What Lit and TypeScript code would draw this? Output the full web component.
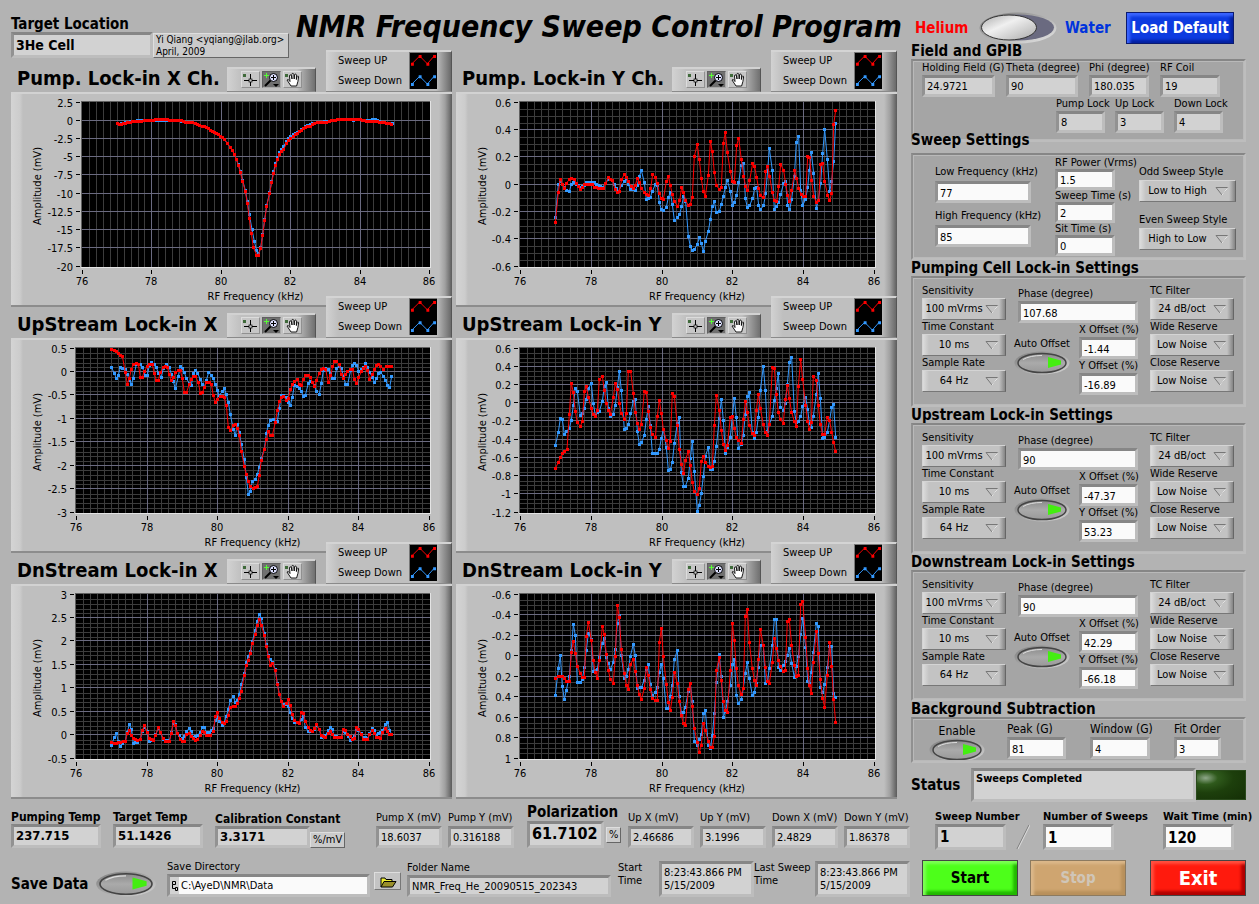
import { LitElement, html, svg, css } from "lit";
import { customElement, property } from "lit/decorators.js";

interface ChartSpec {
  title: string;
  /** Corner of the recorder raster (three units per pixel) shown at the panel corner. */
  corner: [number, number];
  plotLeft: number;
  plotRight: number;
  y: { from: number; to: number; step: number; minor: number };
  up: string;
  down: string;
}

const CHARTS: ChartSpec[] = [
  {
    title: "Pump. Lock-in X Ch.",
    corner: [33, 276],
    plotLeft: 71,
    plotRight: 418,
    y: { from: 2.5, to: -20, step: 2.5, minor: 0 },
    up: "351 371 358 373 376 370 397 365 425 363 453 361 474 358 495 358 515 361 543 361 557 367 578 368 592 374 613 380 625 386 637 394 649 400 661 408 673 418 682 430 691 443 697 451 703 463 709 478 715 496 721 517 728 544 736 574 742 610 748 655 754 700 760 742 770 766 775 766 782 745 788 706 794 661 800 619 809 580 815 547 821 520 827 496 833 478 839 463 851 448 860 430 872 415 886 404 898 395 910 386 930 378 952 368 980 367 995 361 1020 359 1042 358 1060 359 1080 358 1100 364 1125 363 1145 368 1160 369 1175 373",
    down: "351 371 358 373 376 368 397 364 425 360 453 361 474 360 495 360 515 361 543 363 557 367 578 367 592 374 613 380 625 386 637 394 649 400 661 408 673 418 682 430 691 443 697 451 703 463 709 478 715 493 721 514 728 541 736 571 742 604 748 644 756 688 763 724 770 752 776 760 782 742 788 703 794 658 800 616 809 578 815 543 821 514 827 490 833 473 839 458 851 438 860 424 872 409 886 400 898 393 910 384 930 374 952 367 980 365 995 361 1020 359 1042 357 1060 360 1080 359 1100 362 1125 359 1145 366 1160 370 1177 370",
  },
  {
    title: "Pump. Lock-in Y Ch.",
    corner: [3, 276],
    plotLeft: 64,
    plotRight: 418,
    y: { from: 0.6, to: -0.6, step: 0.2, minor: 4 },
    up: "301 667 310 577 316 537 322 553 328 565 334 550 343 538 349 534 358 538 364 550 370 559 376 568 382 562 388 553 412 553 418 562 436 565 446 565 452 550 460 532 466 538 472 540 480 568 488 577 493 574 500 538 508 523 514 532 520 543 528 559 536 566 541 556 547 535 553 547 560 566 568 577 575 583 581 587 587 565 593 523 601 532 607 550 613 580 619 596 625 599 634 544 640 530 646 556 652 583 658 604 668 619 674 602 680 562 686 578 692 602 700 616 706 613 712 592 718 468 727 434 733 478 739 536 745 575 751 589 760 526 766 425 772 455 778 517 784 556 793 569 799 562 805 430 811 397 817 457 826 515 832 545 838 548 845 436 851 415 859 478 866 530 872 560 878 572 884 541 893 490 899 500 905 533 911 566 917 587 926 593 932 514 938 499 944 530 952 578 957 600 965 605 971 560 977 493 986 511 992 553 998 586 1004 605 1010 571 1019 512 1025 535 1031 565 1038 583 1046 590 1052 590 1058 469 1064 472 1070 541 1076 590 1085 607 1091 601 1097 493 1103 490 1109 544 1118 586 1124 601 1130 580 1136 373 1142 331",
    down: "301 653 310 553 316 545 322 553 328 562 334 571 343 574 349 553 355 547 364 553 376 562 388 556 394 547 418 548 430 556 442 562 452 550 460 538 472 541 484 565 490 574 500 556 508 544 514 535 520 553 526 568 541 571 547 556 553 529 559 511 568 547 574 598 580 595 586 592 592 574 601 553 607 556 613 608 619 628 625 632 634 622 640 592 646 577 652 613 658 661 668 653 674 643 680 619 686 589 692 604 700 709 706 739 712 751 718 748 727 733 733 712 739 730 745 754 751 724 760 694 766 658 772 619 778 604 784 637 793 634 799 613 805 589 811 562 817 541 826 574 832 616 838 607 845 586 851 547 859 496 866 490 871 595 877 622 884 616 893 595 899 565 905 562 911 616 917 629 926 616 932 580 938 511 943 445 952 511 958 628 964 619 971 607 977 583 986 550 992 545 998 616 1004 629 1010 598 1018 530 1024 427 1031 409 1037 571 1043 616 1052 598 1058 562 1063 511 1069 457 1076 520 1084 625 1090 601 1097 550 1103 460 1109 388 1117 478 1124 574 1130 545 1136 484 1142 370",
  },
  {
    title: "UpStream Lock-in X",
    corner: [33, 129],
    plotLeft: 65,
    plotRight: 418,
    y: { from: 0.5, to: -3, step: 0.5, minor: 5 },
    up: "334 163 343 166 349 169 355 175 361 181 367 184 376 232 382 268 388 250 394 223 400 208 409 205 415 208 421 247 427 247 433 229 442 214 448 208 457 208 463 235 469 256 475 256 481 232 490 217 496 214 502 217 508 238 514 256 520 247 526 232 535 226 541 226 547 250 553 292 559 293 568 268 574 253 580 244 586 244 595 262 601 295 607 293 613 277 619 262 628 262 634 268 640 301 646 322 653 313 660 304 667 304 673 307 679 331 685 397 692 407 699 391 706 388 712 400 718 421 724 469 733 514 739 538 745 560 751 574 760 580 766 577 772 574 778 541 784 496 793 463 799 433 805 409 811 421 817 421 826 382 832 346 838 319 844 307 851 304 859 316 865 310 872 283 877 268 883 259 892 253 898 268 904 271 910 253 916 241 925 241 931 247 937 262 943 275 949 256 958 235 964 223 970 220 977 223 985 262 992 241 998 214 1004 200 1010 200 1018 208 1024 238 1030 250 1037 238 1043 230 1052 223 1058 223 1063 253 1070 265 1076 247 1085 229 1097 214 1103 226 1109 253 1117 238 1124 223 1130 211 1136 208 1142 214 1151 223 1160 214 1175 214",
    down: "334 217 343 235 349 250 355 241 361 217 376 223 382 238 388 256 394 268 400 250 409 208 421 208 427 217 436 241 442 241 448 211 454 202 463 208 469 217 475 235 484 247 490 220 500 208 508 217 514 238 520 259 526 281 535 244 541 214 547 220 553 232 559 250 568 265 574 271 580 235 586 226 593 235 601 253 607 268 613 277 619 256 626 232 634 241 640 250 646 268 652 286 658 301 667 289 673 280 679 298 685 322 691 358 700 403 706 421 712 388 718 412 724 448 733 493 739 547 745 598 751 589 757 559 766 553 772 538 778 517 784 490 793 463 799 415 805 391 811 376 819 373 826 379 832 379 838 340 844 301 851 301 859 307 865 322 871 331 877 307 883 272 892 274 898 280 904 289 910 304 916 301 925 265 931 259 937 262 943 271 949 289 958 298 964 265 970 226 977 220 985 223 992 235 998 250 1004 250 1010 220 1018 214 1024 220 1037 268 1043 268 1052 226 1058 211 1063 205 1070 211 1076 229 1085 223 1091 217 1097 205 1103 217 1109 232 1117 247 1124 262 1130 250 1136 235 1142 232 1151 244 1157 256 1163 271 1169 277 1175 244",
  },
  {
    title: "UpStream Lock-in Y",
    corner: [3, 129],
    plotLeft: 64,
    plotRight: 418,
    y: { from: 0.6, to: -1.2, step: 0.2, minor: 4 },
    up: "301 520 310 502 316 487 322 475 328 469 336 463 343 358 349 265 355 292 361 349 367 382 376 394 382 379 388 289 394 274 400 307 409 340 415 358 421 364 427 346 433 253 442 244 448 286 454 325 460 346 466 358 475 307 481 265 487 283 493 325 499 355 508 373 514 355 520 229 527 229 535 295 541 352 547 385 553 403 559 388 568 289 574 292 580 349 586 397 592 418 601 427 607 364 613 316 619 355 625 403 634 436 640 460 646 439 652 295 658 304 667 391 673 463 679 508 686 535 691 496 700 469 706 511 712 562 718 589 727 598 733 580 739 499 745 484 751 502 760 514 766 517 772 514 778 391 784 301 793 346 799 406 805 448 811 466 817 451 826 367 832 364 838 400 844 427 850 436 859 445 865 373 871 319 877 352 883 391 892 415 898 421 904 346 910 298 916 340 925 388 931 412 937 421 943 388 952 217 958 220 964 298 970 352 976 373 985 385 991 313 997 271 1003 310 1010 352 1018 379 1024 394 1030 274 1037 193 1043 253 1052 331 1058 379 1063 403 1069 382 1075 244 1084 256 1090 331 1096 388 1103 418 1109 418 1117 367 1124 376 1130 412 1136 442 1142 469",
    down: "301 451 310 412 316 370 322 373 328 418 334 409 343 400 349 376 355 331 361 280 367 289 376 361 382 355 388 340 394 313 400 280 409 265 415 325 421 361 427 352 433 349 442 319 448 274 454 262 460 340 466 364 475 358 481 331 487 277 493 229 499 286 508 403 514 400 520 388 527 355 535 319 541 313 547 409 553 448 559 442 568 421 574 373 580 334 586 391 592 475 607 475 613 463 619 430 625 403 634 457 640 526 646 523 652 502 658 445 667 385 673 367 679 532 686 574 691 574 700 550 706 490 712 439 718 529 727 649 733 631 739 595 745 544 751 484 760 457 766 523 772 523 778 499 784 454 793 370 799 313 805 376 811 475 817 457 826 427 832 364 838 310 844 367 850 460 859 448 865 421 871 358 877 304 883 292 892 412 898 430 904 412 910 367 916 286 925 214 931 286 937 409 943 388 952 364 958 316 964 280 970 235 976 337 985 346 991 325 997 268 1003 202 1010 187 1018 349 1024 382 1030 379 1037 364 1043 334 1052 307 1058 343 1063 385 1069 397 1075 364 1084 298 1090 235 1096 310 1103 430 1109 427 1117 412 1124 376 1130 337 1136 328 1142 427",
  },
  {
    title: "DnStream Lock-in X",
    corner: [33, 132],
    plotLeft: 65,
    plotRight: 418,
    y: { from: 3, to: -0.5, step: 0.5, minor: 5 },
    up: "334 607 343 610 355 608 376 604 382 580 388 571 394 586 400 595 412 601 421 598 427 571 433 556 442 577 448 595 460 601 466 586 475 562 481 577 490 595 496 603 508 604 514 580 520 544 526 556 532 580 541 598 547 604 553 604 559 583 568 580 574 589 586 601 592 598 601 586 607 574 613 577 619 586 631 586 640 574 646 529 652 517 658 535 667 547 673 550 679 544 685 526 691 502 700 499 706 499 712 490 718 475 724 454 733 406 739 376 745 361 751 340 757 310 766 283 772 256 778 238 784 256 793 286 799 319 805 349 811 376 817 370 826 391 832 433 838 463 844 484 850 499 859 490 865 478 871 496 877 523 883 541 892 547 898 550 904 517 910 520 916 544 925 562 931 571 937 574 943 565 949 553 958 568 964 586 976 592 985 580 991 574 997 583 1003 592 1024 592 1030 568 1037 571 1043 583 1058 598 1063 595 1070 562 1076 568 1084 583 1090 598 1103 598 1109 583 1117 571 1124 580 1130 592 1142 595 1148 577 1157 565 1163 574 1169 583 1175 583",
    down: "334 616 343 592 349 580 355 604 361 619 376 604 382 577 388 553 394 568 400 610 412 607 421 598 427 574 433 562 442 574 448 604 460 601 475 565 481 577 490 598 508 604 520 550 526 553 532 580 547 595 553 589 559 574 568 565 574 574 580 592 592 586 601 577 607 562 613 562 619 577 628 577 640 565 646 541 652 532 658 544 667 556 673 547 679 529 685 508 691 481 700 469 706 487 712 481 718 463 724 433 733 400 739 367 745 349 751 334 757 304 766 271 772 244 778 223 784 235 793 280 799 313 805 346 811 358 817 367 826 388 832 430 838 463 844 484 850 493 859 493 865 499 871 517 877 535 883 547 898 550 910 529 916 562 925 574 937 574 943 568 949 556 958 568 964 592 976 586 985 571 991 562 997 568 1003 589 1024 592 1030 574 1037 577 1051 601 1063 589 1070 568 1076 571 1090 592 1103 595 1109 580 1117 565 1124 571 1130 586 1142 577 1148 571 1157 553 1163 547 1169 571 1175 583",
  },
  {
    title: "DnStream Lock-in Y",
    corner: [3, 132],
    plotLeft: 64,
    plotRight: 418,
    y: { from: -0.6, to: 1, step: 0.2, minor: 4 },
    up: "301 415 310 409 316 409 322 410 328 415 334 424 343 424 349 337 355 304 361 340 367 379 376 400 382 412 388 412 394 289 400 247 409 301 415 361 421 397 427 415 433 361 442 259 448 283 454 343 460 391 466 418 475 430 481 349 487 196 493 232 499 328 508 400 514 436 520 448 526 373 535 358 541 394 547 436 553 463 559 478 568 445 574 382 580 406 586 448 592 475 601 481 607 481 613 307 619 265 625 349 634 433 640 487 646 511 652 472 658 397 667 430 673 484 679 526 685 550 691 556 700 448 706 430 712 499 718 565 727 607 733 637 739 616 745 550 751 571 760 604 766 622 772 622 778 589 784 391 793 352 799 421 805 484 811 511 817 517 826 391 832 250 838 301 844 385 850 436 859 463 865 445 871 229 877 208 883 307 892 385 898 421 904 436 910 358 916 268 925 316 931 382 937 424 943 430 952 367 958 295 964 325 970 361 976 379 985 394 991 391 997 244 1003 238 1010 316 1018 376 1024 409 1030 406 1037 193 1043 184 1052 292 1058 385 1063 436 1069 460 1075 367 1084 274 1090 340 1096 418 1103 475 1109 502 1117 406 1124 307 1130 379 1136 478 1142 547",
    down: "301 466 310 385 316 346 322 439 328 478 334 451 343 409 349 331 355 253 361 286 367 427 376 427 382 418 388 382 394 331 400 280 409 298 415 394 421 391 427 388 433 352 442 310 448 295 454 352 466 388 475 367 481 328 487 250 493 226 499 346 508 415 514 409 520 388 526 349 535 313 541 346 547 445 559 442 568 421 574 388 580 373 586 433 592 466 601 457 607 442 613 397 619 373 625 415 634 505 640 505 652 436 658 358 667 331 673 469 679 517 685 517 691 502 700 454 706 430 712 484 718 604 727 616 739 583 745 520 751 511 760 616 766 625 772 586 778 520 784 427 793 343 799 409 805 532 811 514 817 484 826 436 832 373 838 358 844 466 850 490 859 478 865 445 871 400 877 367 883 415 892 466 898 457 904 430 910 382 916 316 925 316 931 430 937 424 943 385 952 316 958 238 964 238 970 382 976 391 985 376 991 364 997 346 1003 325 1010 370 1018 412 1030 349 1037 283 1043 235 1052 322 1058 424 1063 430 1069 397 1075 337 1084 250 1090 259 1096 442 1103 457 1109 433 1117 382 1124 319 1130 319 1136 460 1142 472",
  },
];

/** Parses a trace and fills long stretches so that samples stay evenly spaced. */
function samples(trace: string): [number, number][] {
  const n = trace.split(" ").map(Number);
  const out: [number, number][] = [[n[0], n[1]]];
  for (let i = 2; i < n.length; i += 2) {
    const [px, py] = out[out.length - 1];
    const parts = Math.max(1, Math.round((n[i] - px) / 7));
    for (let k = 1; k <= parts; k++) {
      out.push([px + ((n[i] - px) * k) / parts, py + ((n[i + 1] - py) * k) / parts]);
    }
  }
  return out;
}

const FONT = css`"DejaVu Sans Condensed", "Noto Sans", sans-serif`;

@customElement("sweep-chart")
export class SweepChart extends LitElement {
  @property({ attribute: false }) spec!: ChartSpec;

  static styles = css`
    :host { display: block; min-width: 0; font: 11px/14px ${FONT}; color: #000; }
    * { box-sizing: border-box; }
    .head { display: grid; grid-template-columns: 216px 89px 1fr 126px; height: 42px; align-items: end; }
    h2 { margin: 0; padding-left: 6px; font-size: 20px; line-height: 28px; font-weight: bold; white-space: nowrap; }
    .palette {
      display: flex; gap: 2px; height: 25px; padding: 2px 0 0 14px;
      background: linear-gradient(90deg, #d2d2d2, #c0c0c0 14px, #c0c0c0 70px, #707070);
      border-top: 2px solid #d2d2d2; border-bottom: 1px solid #8a8a8a; border-right: 1px solid #555;
    }
    .tool { width: 19px; height: 17px; padding: 0; border: 1px solid; border-color: #dcdcdc #909090 #909090 #dcdcdc; background: #c6c6c6; }
    .tool.on { background: #707070; border-color: #606060 #aaa #aaa #606060; }
    .tool svg { display: block; width: 17px; height: 15px; }
    .legend {
      grid-column: 4; display: grid; grid-template-columns: 1fr 28px; height: 42px; padding: 0 14px 1px 12px;
      background: linear-gradient(90deg, #d2d2d2, #bfbfbf 12px, #bfbfbf 110px, #6a6a6a);
      border-top: 2px solid #d4d4d4; border-bottom: 1px solid #8a8a8a; border-right: 1px solid #555;
    }
    .names { display: grid; grid-template-rows: 20px 20px; font-size: 11px; line-height: 18px; }
    .swatch { display: block; width: 28px; height: 37px; background: #000; border: solid #777; border-width: 1px 0 0 1px; }
    .panel {
      border-top: 2px solid #d2d2d2; border-bottom: 2px solid #8c8c8c; height: 215px;
      background: linear-gradient(90deg, #d4d4d4, #cccccc 9px, #bfbfbf 12px, #bfbfbf calc(100% - 13px), #a0a0a0 calc(100% - 7px), #5c5c5c);
    }
    .plot { display: block; width: 100%; height: 215px; margin-top: -2px; }
    .plot text { font-size: 11px; fill: #000; }
    .major { stroke: #6a6a80; } .minor { stroke: #3c3c3c; } .tick { stroke: #000; }
    .up { stroke: #ff0000; fill: none; stroke-width: 3; }
    .down { stroke: #3399ff; fill: none; stroke-width: 3; }
    .updot { fill: #ff0000; } .downdot { fill: #3399ff; }
  `;

  private trace(data: string, kind: string) {
    const pts = samples(data);
    return svg`
      <polyline class=${kind} points=${pts.map((p) => p.join(",")).join(" ")}></polyline>
      <path class=${kind + "dot"} shape-rendering="crispEdges" d=${pts.map(([x, y]) => `M${x - 4.5} ${y - 4.5}h9v9h-9z`).join("")}></path>`;
  }

  private grid() {
    const { plotLeft: l, plotRight: r, y } = this.spec;
    const top = 10.5;
    const bottom = 174.5;
    const at = (a: number, b: number, k: number, n: number) => Math.round(a + ((b - a) * k) / n);
    const rows = Math.round(Math.abs(y.to - y.from) / y.step);
    const sub = y.minor || 1;
    const sign = y.to > y.from ? 1 : -1;
    const lines = [];
    for (let k = 1; k < 50; k++) if (k % 10) lines.push(svg`<path class="minor" d="M${at(l, r, k, 50) + 0.5} 10V175"></path>`);
    for (let k = 1; k < rows * sub; k++) if (k % sub) lines.push(svg`<path class="minor" d="M${l} ${at(top, bottom, k, rows * sub) + 0.5}H${r + 1}"></path>`);
    for (let k = 1; k < 5; k++) lines.push(svg`<path class="major" d="M${at(l, r, k, 5) + 0.5} 10V175"></path>`);
    for (let k = 0; k <= rows; k++) {
      const yy = at(top, bottom, k, rows) - 0.5;
      if (k && k < rows) lines.push(svg`<path class="major" d="M${l} ${yy}H${r + 1}"></path>`);
      lines.push(svg`<path class="tick" d="M${l - 6} ${yy}h4"></path>
        <text x=${l - 9} y=${yy + 4.5} text-anchor="end">${Number((y.from + sign * k * y.step).toFixed(2))}</text>`);
    }
    for (let k = 0; k <= 5; k++) {
      lines.push(svg`<path class="tick" d="M${at(l, r, k, 5) + 0.5} 178v4"></path>
        <text x=${at(l, r, k, 5)} y="193" text-anchor="middle">${76 + 2 * k}</text>`);
    }
    return lines;
  }

  render() {
    const { title, corner, plotLeft: l, plotRight: r, up, down } = this.spec;
    const cy = 94;
    const cx = 30;
    return html`
      <div class="head">
        <h2>${title}</h2>
        <div class="palette">
          <button class="tool" aria-label="Cursor"><svg viewBox="0 0 17 15"><rect x="1" y="2" width="3" height="3" fill="#3f6a3a"/><path d="M2 8.500h13M8.500 2v12" stroke="#000"/><rect x="7" y="7" width="3" height="3" fill="#c6c6c6" stroke="#000" stroke-width=".7"/></svg></button>
          <button class="tool on" aria-label="Zoom"><svg viewBox="0 0 17 15"><path d="M1 3.500h5M3.500 1v5" stroke="#5f3"/><path d="M8 8l-6 6" stroke="#000" stroke-width="2"/><circle cx="10.500" cy="5.500" r="4" fill="#dde0ff" stroke="#000"/><path d="M8 5.500h5M10.500 3v5" stroke="#000"/><path d="M10 12h6l-3 3z"/></svg></button>
          <button class="tool" aria-label="Pan"><svg viewBox="0 0 17 15"><rect x="1" y="2" width="3" height="3" fill="#3f6a3a"/><path d="M7 14c-1-2-3-4-4-6 1-1 2 0 3 1.500L5.500 4c0-1.500 1.700-1.500 2 0l.5 3-.2-4.500c0-1.500 1.900-1.500 2 0l.4 4.500.3-4c.2-1.300 1.800-1.200 1.900 0v4.500l.7-3c.5-1 1.600-.6 1.500.5-.2 3-1 6-2 9z" fill="#fff" stroke="#000" stroke-width=".9"/></svg></button>
        </div>
        <div class="legend">
          <div class="names"><span>Sweep UP</span><span>Sweep Down</span></div>
          <svg class="swatch" viewBox="0 0 28 37">
            ${[
              ["#ff0000", 0],
              ["#3399ff", 21],
            ].map(([c, dy]) => svg`<path d="M2 ${11 + +dy}L10 ${3 + +dy}L18 ${11 + +dy}L25 ${3 + +dy}" fill="none" stroke=${c}></path>
              <path d="M1 ${10 + +dy}h3v3h-3zM9 ${2 + +dy}h3v3h-3zM17 ${10 + +dy}h3v3h-3zM24 ${2 + +dy}h3v3h-3z" fill=${c}></path>`)}
          </svg>
        </div>
      </div>
      <div class="panel">
        <svg class="plot" viewBox="0 0 441 215">
          <path d="M${l - 1} 9H${r + 2}V176H${l - 1}z" fill="#e4e4e4"></path>
          <path d="M${l - 1} 9H${r + 1}V10H${l}V175H${l - 1}z" fill="#606060"></path>
          <rect x=${l} y="10" width=${r - l + 1} height="165" fill="#000"></rect>
          ${this.grid()}
          <text x=${(l + r) / 2} y="208" text-anchor="middle">RF Frequency (kHz)</text>
          <text x=${cx} y=${cy} text-anchor="middle" transform="rotate(-90 ${cx} ${cy})">Amplitude (mV)</text>
          <svg x="0" y="0" width="441" height="215" viewBox="${corner[0]} ${corner[1]} 1323 645">
            ${this.trace(down, "down")}${this.trace(up, "up")}
          </svg>
        </svg>
      </div>`;
  }
}

interface FieldOpts { out?: boolean; cls?: string; unit?: string }

@customElement("app-root")
export class AppRoot extends LitElement {
  static styles = css`
    :host { display: block; font: 11px/14px ${FONT}; color: #000; background: #b3b3b3; }
    * { box-sizing: border-box; }
    button, input, select, output { font: inherit; color: inherit; }
    h1, h2 { margin: 0; white-space: nowrap; }
    .page { display: grid; grid-template-columns: minmax(0, 1fr) 335px; gap: 14px; padding: 0 13px 8px 11px; background: #b3b3b3; }
    .left { min-width: 0; }

    .bevel {
      display: block; width: 100%; height: 22px; margin: 0; padding: 2px 0 0 2px; line-height: 14px; outline: 0; border-radius: 0;
      border: 3px solid; border-color: #868686 #bdbdbd #bdbdbd #929292; background: #fafafa; white-space: nowrap; overflow: hidden;
    }
    .out { background: #d2d2d2; }
    .field { display: block; min-width: 0; white-space: nowrap; }
    .name { display: block; }

    .top { display: flex; height: 50px; white-space: nowrap; }
    .target { flex: none; width: 142px; padding-top: 17px; font-size: 15px; line-height: 15px; font-weight: bold; }
    .target .bevel { height: 26px; padding-top: 3px; font-size: 14px; }
    .author { align-self: start; flex: none; width: 136px; height: 25px; margin-top: 33px; padding-left: 2px; font-size: 10px; line-height: 12px; background: #cbcbcb; border: 1px solid; border-color: #dedede #666 #666 #dedede; }
    h1 { padding: 8px 0 0 7px; font-size: 30px; line-height: 38px; font-style: italic; font-weight: bold; }
    .charts { display: grid; grid-template-columns: 1fr 1fr; gap: 0 4px; }
    .charts sweep-chart:nth-child(n + 3) { margin-top: -11px; }

    .readouts { display: grid; grid-template-columns: 102px 102px 161px 72px 79px 101px 72px 72px 72px 66px; align-items: end; margin-right: -13px; padding-top: 4px; }
    .temp { width: 90px; font-size: 12px; font-weight: bold; }
    .temp .bevel { height: 24px; font-size: 13px; }
    .cal { font-size: 12px; font-weight: bold; }
    .row { display: flex; align-items: end; }
    .cal .bevel { width: 95px; font-size: 13px; height: 22px; padding-top: 1px; }
    .polar { font-size: 15px; font-weight: bold; }
    .polar .name { line-height: 18px; }
    .polar .bevel { width: 77px; height: 27px; font-size: 16px; line-height: 18px; padding-top: 1px; }
    .mv { width: 66px; }
    .mv .name { line-height: 16px; }
    .unit { flex: none; height: 16px; padding: 0 2px; line-height: 14px; font-weight: normal; font-size: 11px; background: #cbcbcb; border: 1px solid; border-color: #dedede #666 #666 #dedede; }
    .polar .unit { align-self: center; margin-left: 2px; }

    .save { display: grid; grid-template-columns: 156px 207px 33px 211px 41px 95px 61px 95px; align-items: end; margin: 12px -13px 0 0; height: 36px; white-space: nowrap; }
    .savedata { display: flex; align-items: center; justify-content: space-between; width: 146px; height: 26px; font-size: 15px; font-weight: bold; }
    .path { display: grid; grid-template-columns: 9px 1fr; width: 203px; height: 23px; border: 3px solid; border-color: #868686 #bdbdbd #bdbdbd #929292; background: #d2d2d2; }
    .path svg { width: 9px; height: 17px; }
    .path input { min-width: 0; border: 0; padding: 0 2px; background: #fafafa; outline: 0; }
    .browse { width: 27px; height: 18px; margin-bottom: 7px; padding: 0; background: #c4c4c4; border: 1px solid; border-color: #dedede #777 #777 #dedede; }
    .browse svg { display: block; margin: 0 auto; width: 18px; height: 13px; }
    .folder { width: 204px; }
    .stamp { height: 36px; width: 95px; padding: 2px 0 0 2px; line-height: 13px; white-space: pre-line; }
    .two { align-self: start; line-height: 13px; padding-top: 1px; white-space: pre-line; }

    .side { display: flex; flex-direction: column; min-width: 0; }
    .mode { display: flex; align-items: center; height: 31px; margin-top: 12px; padding: 0 12px 0 4px; font-size: 15px; font-weight: bold; }
    .he { width: 64px; color: #f00; } .water { width: 61px; padding-left: 8px; color: #0033dd; }
    .slide { width: 78px; height: 32px; padding: 0; border: 0; background: none; }
    .slide svg { display: block; width: 78px; height: 32px; }
    .cmd { height: 36px; width: 96px; padding: 0; font-size: 15px; font-weight: bold; border: 1px solid #444; white-space: nowrap; }
    .load { width: 108px; height: 32px; flex: none; margin-left: auto; color: #fff; background: #0d3be0; border-color: #0a1a70; box-shadow: inset 3px 3px 3px #3d66ff, inset -3px -3px 3px #0420a0; }
    .start { background: #4dff1a; box-shadow: inset 3px 3px 3px #7dff55, inset -4px -4px 3px #22b800; }
    .stop { background: #cfa570; color: #d0c6b8; border-color: #8c7a60; box-shadow: inset 3px 3px 3px #dbb88a, inset -4px -4px 3px #b8905c; }
    .exit { background: #ff1a0d; color: #fff; font-size: 20px; box-shadow: inset 3px 3px 3px #ff5040, inset -4px -4px 3px #b00000; }

    .side h2 { font-size: 15px; line-height: 16px; font-weight: bold; }
    .box { background: #a5a5a5; border: 2px solid; border-color: #868686 #bdbdbd #bdbdbd #909090; outline: 1px solid #b9b9b9; outline-offset: -3px; }
    .gpib { height: 83px; padding-left: 9px; }
    .gpib .r1 { display: grid; grid-template-columns: 73px 72px 60px 60px; gap: 11px; }
    .gpib .r2 { display: grid; grid-template-columns: 49px 49px 49px; gap: 10px; margin-left: 134px; }
    .side .over { margin-top: -11px; padding-bottom: 4px; line-height: 18px; }
    .sweep { display: grid; grid-template-columns: 96px 60px 97px; column-gap: 24px; height: 107px; padding-left: 22px; }
    .sa { display: grid; align-content: start; gap: 6px; padding-top: 10px; }
    .sa .bevel { margin-top: 2px; }
    .sb { padding-top: 2px; } .sb .name { line-height: 12px; } .sb .bevel { height: 21px; padding-top: 1px; }
    .sc { display: grid; align-content: start; gap: 10px; padding-top: 9px; }
    .sc .name { line-height: 16px; }
    .lock { display: grid; grid-template-columns: 92px 136px 84px; height: 131px; padding-left: 9px; }
    .stack { width: 84px; padding-top: 6px; }
    .mid { padding: 9px 12px 0 0; }
    .phase { margin-left: 4px; }
    .offsets { display: flex; justify-content: space-between; }
    .offsets .vals { width: 59px; }
    .auto { padding-top: 14px; }
    .press { display: flex; flex-direction: column; align-items: center; white-space: nowrap; }
    .bg { display: grid; grid-template-columns: 52px 59px 60px 47px; column-gap: 24px; height: 46px; padding: 2px 0 0 18px; }
    .bg .name { font-size: 12px; line-height: 16px; }
    .bg .press { padding-top: 3px; font-size: 12px; }

    .pick { display: grid; height: 22px; background: linear-gradient(90deg, #dcdcdc, #c3c3c3 6px, #c3c3c3 calc(100% - 6px), #858585); border: 1px solid; border-color: #d4d4d4 #666 #777 #d4d4d4; }
    .pick > * { grid-area: 1 / 1; }
    .pick select { appearance: none; width: 100%; border: 0; background: none; padding: 0 22px 0 2px; text-align: center; text-align-last: center; line-height: 14px; outline: 0; }
    .pick svg { justify-self: end; align-self: center; margin-right: 6px; width: 14px; height: 10px; pointer-events: none; }
    .led { padding: 0; border: 0; background: none; display: block; }
    .led svg { display: block; }

    .status { display: grid; grid-template-columns: 60px 1fr 50px; align-items: center; margin-top: 5px; height: 34px; font-size: 15px; font-weight: bold; }
    .status .bevel { height: 34px; font-size: 11px; padding-top: 1px; }
    .lamp { height: 30px; background: radial-gradient(ellipse at 18% 25%, #8fa88a 0, #2f5a1c 22%, #1d3f0c 50%, #142f06); border: 1px solid #2a4a1c; }
    .nums { display: grid; grid-template-columns: 108px 120px 96px; margin: 8px 0 0 11px; font-weight: bold; padding-left: 13px; }
    .nums .bevel { width: 71px; height: 26px; font-size: 15px; line-height: 18px; padding-top: 1px; }
    .nums .row { gap: 0; }
    .nums .row .field { width: 71px; }
    .slash { flex: none; margin-left: 10px; }
    .cmds { display: grid; grid-template-columns: 108px 120px 96px; margin: 10px 0 0 11px; }
  `;

  private field(label: string, value: string, o: FieldOpts = {}) {
    const control = o.out
      ? html`<output class="bevel out">${value}</output>`
      : html`<input class="bevel" .value=${value} />`;
    return html`<label class="field ${o.cls ?? ""}"><span class="name">${label}</span>${o.unit ? html`<span class="row">${control}<span class="unit">${o.unit}</span></span>` : control}</label>`;
  }

  private pick(label: string, value: string) {
    return html`<label class="field"><span class="name">${label}</span>
      <span class="pick"><select><option>${value}</option></select>
        <svg viewBox="0 0 14 10"><path d="M1 1.500h12L7 9z" fill="none" stroke="#777"/><path d="M13 1.500L7 9" stroke="#eee"/></svg>
      </span></label>`;
  }

  private oval(label: string, w = 56, h = 24) {
    return html`<button class="led" role="switch" aria-checked="true" aria-label=${label}>
      <svg width=${w} height=${h} viewBox="0 0 56 24">
        <defs>
          <linearGradient id="face" x1="0" y1="0" x2="0" y2="1"><stop offset="0" stop-color="#8a8a8a"/><stop offset=".5" stop-color="#aaa"/><stop offset="1" stop-color="#999"/></linearGradient>
          <linearGradient id="rim" x1="0" y1="0" x2="1" y2="1"><stop offset="0" stop-color="#7d7d7d"/><stop offset="1" stop-color="#d4d4d4"/></linearGradient>
        </defs>
        <ellipse cx="28" cy="12" rx="27.500" ry="11.500" fill="url(#rim)"/>
        <ellipse cx="28" cy="12" rx="24" ry="9.500" fill="url(#face)" stroke="#444" stroke-width="1.500"/>
        <path d="M9 8.500Q16 4.500 28 4.500" fill="none" stroke="#ddd"/>
        <path d="M34 6l13 3.500v4L34 17z" fill="#44ee11"/>
      </svg></button>`;
  }

  private lockin(title: string, phase: string, x: string, y: string) {
    return html`<h2>${title}</h2>
      <div class="box lock">
        <div class="stack">${this.pick("Sensitivity", "100 mVrms")}${this.pick("Time Constant", "10 ms")}${this.pick("Sample Rate", "64 Hz")}</div>
        <div class="mid">
          ${this.field("Phase (degree)", phase, { cls: "phase" })}
          <div class="offsets">
            <div class="press auto"><span>Auto Offset</span>${this.oval("Auto Offset")}</div>
            <div class="vals">${this.field("X Offset (%)", x)}${this.field("Y Offset (%)", y)}</div>
          </div>
        </div>
        <div class="stack">${this.pick("TC Filter", "24 dB/oct")}${this.pick("Wide Reserve", "Low Noise")}${this.pick("Close Reserve", "Low Noise")}</div>
      </div>`;
  }

  render() {
    const out = (l: string, v: string, cls = "") => this.field(l, v, { out: true, cls });
    return html`<main class="page">
      <div class="left">
        <header class="top">
          ${out("Target Location", "3He Cell", "target")}
          <div class="author">Yi Qiang &lt;yqiang@jlab.org&gt;<br />April, 2009</div>
          <h1>NMR Frequency Sweep Control Program</h1>
        </header>
        <div class="charts">${CHARTS.map((c) => html`<sweep-chart .spec=${c}></sweep-chart>`)}</div>
        <div class="readouts">
          ${out("Pumping Temp", "237.715", "temp")}${out("Target Temp", "51.1426", "temp")}
          ${this.field("Calibration Constant", "3.3171", { out: true, cls: "cal", unit: "%/mV" })}
          ${out("Pump X (mV)", "18.6037", "mv")}${out("Pump Y (mV)", "0.316188", "mv")}
          ${this.field("Polarization", "61.7102", { out: true, cls: "polar", unit: "%" })}
          ${out("Up X (mV)", "2.46686", "mv")}${out("Up Y (mV)", "3.1996", "mv")}
          ${out("Down X (mV)", "2.4829", "mv")}${out("Down Y (mV)", "1.86378", "mv")}
        </div>
        <div class="save">
          <div class="savedata"><span>Save Data</span>${this.oval("Save Data", 62, 26)}</div>
          <label class="field"><span class="name">Save Directory</span>
            <span class="path"><svg viewBox="0 0 9 17"><path d="M2.500 4.500h3v3h-3zM2.500 7.500v4h3M5.500 10.500h2v3h-2z" fill="none" stroke="#000"/></svg><input .value=${"C:\\AyeD\\NMR\\Data"} /></span>
          </label>
          <button class="browse" aria-label="Browse"><svg viewBox="0 0 18 13"><path d="M2 12V3h4l1 1.500h6V7" fill="#ee3" stroke="#000"/><path d="M2 12l3-5.500h12L13.500 12z" fill="#998f2a" stroke="#000"/></svg></button>
          ${out("Folder Name", "NMR_Freq_He_20090515_202343", "folder")}
          <span class="two">${"Start\nTime"}</span><output class="bevel out stamp">${"8:23:43.866 PM\n5/15/2009"}</output>
          <span class="two">${"Last Sweep\nTime"}</span><output class="bevel out stamp">${"8:23:43.866 PM\n5/15/2009"}</output>
        </div>
      </div>
      <div class="side">
        <div class="mode">
          <span class="he">Helium</span>
          <button class="slide" role="switch" aria-checked="false" aria-label="Helium or Water">
            <svg viewBox="0 0 78 32">
              <defs><linearGradient id="k" x1="0" y1="0" x2="1" y2="1"><stop offset="0" stop-color="#aaa"/><stop offset=".4" stop-color="#f0f0f0"/><stop offset="1" stop-color="#aaa"/></linearGradient>
              <linearGradient id="r" x1="0" y1="0" x2="1" y2="1"><stop offset="0" stop-color="#777"/><stop offset="1" stop-color="#e8e8e8"/></linearGradient></defs>
              <ellipse cx="39" cy="16" rx="38.500" ry="15.500" fill="url(#r)"/><ellipse cx="39" cy="15.500" rx="36" ry="13" fill="#6a6a80"/>
              <ellipse cx="30" cy="15.500" rx="27.500" ry="12.500" fill="url(#k)" stroke="#333"/>
            </svg></button>
          <span class="water">Water</span>
          <button class="cmd load">Load Default</button>
        </div>
        <h2>Field and GPIB</h2>
        <div class="box gpib">
          <div class="r1">${out("Holding Field (G)", "24.9721")}${out("Theta (degree)", "90")}${out("Phi (degree)", "180.035")}${out("RF Coil", "19")}</div>
          <div class="r2">${out("Pump Lock", "8")}${out("Up Lock", "3")}${out("Down Lock", "4")}</div>
        </div>
        <h2 class="over">Sweep Settings</h2>
        <div class="box sweep">
          <div class="sa">${this.field("Low Frequency (kHz)", "77")}${this.field("High Frequency (kHz)", "85")}</div>
          <div class="sb">${this.field("RF Power (Vrms)", "1.5")}${this.field("Sweep Time (s)", "2")}${this.field("Sit Time (s)", "0")}</div>
          <div class="sc">${this.pick("Odd Sweep Style", "Low to High")}${this.pick("Even Sweep Style", "High to Low")}</div>
        </div>
        ${this.lockin("Pumping Cell Lock-in Settings", "107.68", "-1.44", "-16.89")}
        ${this.lockin("Upstream Lock-in Settings", "90", "-47.37", "53.23")}
        ${this.lockin("Downstream Lock-in Settings", "90", "42.29", "-66.18")}
        <h2>Background Subtraction</h2>
        <div class="box bg">
          <div class="press"><span>Enable</span>${this.oval("Enable")}</div>
          ${this.field("Peak (G)", "81")}${this.field("Window (G)", "4")}${this.field("Fit Order", "3")}
        </div>
        <div class="status"><span>Status</span><output class="bevel out">Sweeps Completed</output><div class="lamp"></div></div>
        <div class="nums">
          <div class="row">${out("Sweep Number", "1")}<svg class="slash" width="14" height="26" viewBox="0 0 14 26"><path d="M1 25L13 1" stroke="#777"/><path d="M2 25L14 1" stroke="#ddd"/></svg></div>
          ${this.field("Number of Sweeps", "1")}${this.field("Wait Time (min)", "120")}
        </div>
        <div class="cmds"><button class="cmd start">Start</button><button class="cmd stop">Stop</button><button class="cmd exit">Exit</button></div>
      </div>
    </main>`;
  }
}
